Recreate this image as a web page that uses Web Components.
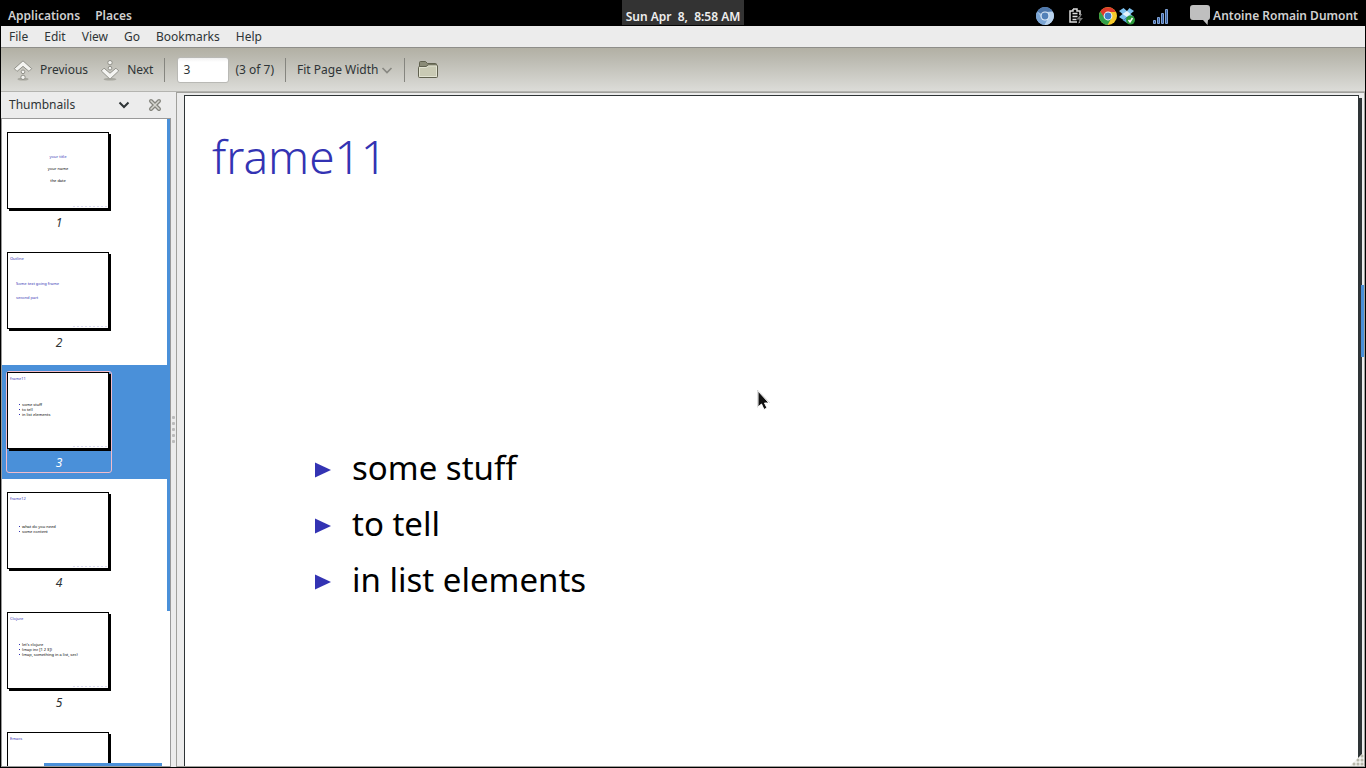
<!DOCTYPE html>
<html lang="en">
<head>
<meta charset="utf-8">
<title>Document viewer</title>
<style>
  html, body { margin: 0; height: 100%; }
  body {
    font-family: "Noto Sans", "Open Sans", sans-serif;
    font-size: 12px;
    line-height: 16px;
    color: #2e3436;
    background: #000;
  }
</style>
</head>
<body>
<desktop-screen></desktop-screen>

<script>
const define = (name, html, setup) => {
  const template = document.createElement('template');
  template.innerHTML = html;
  customElements.define(name, class extends HTMLElement {
    connectedCallback() {
      if (this.shadowRoot) return;
      const root = this.attachShadow({ mode: 'open' });
      root.append(template.content.cloneNode(true));
      if (setup) setup(this, root);
    }
  });
};

/* Desktop panel along the top edge */
define('top-panel', `
<style>
  :host { display: grid; grid-template-columns: 1fr auto 1fr; height: 26px; flex: none;
          background: #000; color: #d0d0d0; font-weight: 600; }
  nav { display: flex; align-items: center; gap: 15px; padding: 5px 8px 0; }
  a { color: inherit; text-decoration: none; }
  time { background: #333; color: #eee; padding: 8px 4px 0; height: 17px; line-height: 17px; white-space: pre; }
  .tray { display: flex; align-items: center; justify-content: flex-end; padding: 5px 8px 0; }
  svg { display: block; flex: none; }
  .battery { margin: 0 14px 0 13px; }
  .signal { margin: 0 20px 0 17px; }
  .chat { margin-right: 2px; }
  .user { white-space: nowrap; }
</style>
<nav><a href="#">Applications</a><a href="#">Places</a></nav>
<time>Sun Apr  8,  8:58 AM</time>
<div class="tray">
  <svg width="20" height="20" viewBox="0 0 20 20">
    <circle cx="10" cy="10" r="9" fill="#9fbfe3"/>
    <path d="M10 10 2.2 5.5A9 9 0 0 1 17.8 5.5L10 6z" fill="#4f78ab"/>
    <path d="M2.2 5.5A9 9 0 0 0 9.500 19L13.500 12 6.500 12z" fill="#7ba5d4"/>
    <path d="M17.8 5.800A9 9 0 0 1 9.500 19L13.500 12 13 6z" fill="#b9d3ee"/>
    <circle cx="10" cy="10" r="4.500" fill="#e2edf8"/><circle cx="10" cy="10" r="3.400" fill="#5381b8"/>
  </svg>
  <svg class="battery" width="16" height="18" viewBox="0 0 16 18">
    <path d="M5 2h4v2h3v4M9 15H2V4h3V2M11 15h1" fill="none" stroke="#ddd" stroke-width="1.500"/>
    <path d="M4.500 6.500h5M4.500 9.500h5M4.500 12.500h4" stroke="#ddd" stroke-width="1.500"/>
    <path d="M13 7 8.500 12.500h3L10 17l5-6h-3l2-4z" fill="#777"/>
  </svg>
  <svg width="20" height="20" viewBox="0 0 20 20">
    <circle cx="10" cy="10" r="9" fill="#f6c92a"/>
    <path d="M10 6h7.800A9 9 0 0 0 2.200 5.500L6 12 10 10z" fill="#dd3b2c"/>
    <path d="M2.200 5.500A9 9 0 0 0 9.500 19L13.500 12 6.500 12z" fill="#31a14a"/>
    <circle cx="10" cy="10" r="4.400" fill="#fff"/><circle cx="10" cy="10" r="3.400" fill="#3f7ec9"/>
  </svg>
  <svg width="18" height="18" viewBox="0 0 18 18">
    <path d="M5.500 1 1 4l3.500 3L1 10l4.500 3L9 10l3.500 3L16 10l-3.500-3L16 4l-4.500-3L9 4z" fill="#7cc1ef"/>
    <path d="M4.500 7 9 4l3.500 3L9 10z" fill="#e6f4fd"/>
    <path d="m4.500 13 4.500 3 4-3-1-1-3-2-3.500 3z" fill="#56a5de"/>
    <circle cx="12.500" cy="13" r="4.500" fill="#2b9a3a"/>
    <path d="m10.500 13 1.500 2 2.500-4" fill="none" stroke="#fff" stroke-width="1.500"/>
  </svg>
  <svg class="signal" width="16" height="16" viewBox="0 0 16 16">
    <g fill="#39609f" stroke="#7fa2d6" stroke-width="1">
      <path d="M.5 12.500h2v3h-2zM4.500 9.500h2v6h-2zM8.500 5.500h2v10h-2zM12.500 1.500h2v14h-2z"/>
    </g>
  </svg>
  <svg class="chat" width="22" height="22" viewBox="0 0 22 22">
    <path d="M4 0h14q3 0 3 3v9q0 3-2 3l-.5 5-4.500-5H4q-3 0-3-3V3q0-3 3-3z" fill="#bfbfbf"/>
  </svg>
  <span class="user">Antoine Romain Dumont</span>
</div>`);

define('menu-bar', `
<style>
  :host { display: flex; gap: 16px; align-items: center; height: 21px; padding: 0 8px; flex: none;
          background: #ececec; border-bottom: 1px solid #8e8e8a; }
  a { color: inherit; text-decoration: none; }
</style>
<a href="#">File</a><a href="#">Edit</a><a href="#">View</a><a href="#">Go</a><a href="#">Bookmarks</a><a href="#">Help</a>`);

define('tool-bar', `
<style>
  :host { display: flex; align-items: center; height: 43px; padding: 0 11px; flex: none;
          background: linear-gradient(#b2b0a4, #bdbcb3 30%, #dcdcd8); border-bottom: 1px solid #b4b4b0; }
  button { display: flex; align-items: center; gap: 6px; margin: 0; padding: 0; border: 0; background: none;
           font: inherit; color: inherit; }
  button + button { margin-left: 11px; }
  svg { display: block; }
  hr { width: 1px; height: 24px; margin: 0 11px; border: 0; background: #85857f; }
  input { width: 52px; height: 26px; box-sizing: border-box; margin: 0 6px 0 1px; padding: 0 5px; font: inherit; color: inherit;
          background: linear-gradient(#f0f0f0, #fff 4px); border: 1px solid #b9b9b5; border-radius: 3px; }
  label { display: flex; align-items: center; }
  select { appearance: none; border: 0; background: none; font: inherit; color: inherit; padding: 0; margin: 0; }
  .chevron { margin-left: 2px; }
  .folder { margin-left: 1px; }
</style>
<button type="button">
  <svg width="22" height="22" viewBox="0 0 22 24">
    <ellipse cx="11" cy="22" rx="6" ry="1.500" fill="#8e8d84" opacity=".6"/>
    <g fill="#f4f4f1" stroke="#8a8a82">
      <path d="M11 2 20.500 10.500 17.500 13.500 11 8 4.500 13.500 1.500 10.500z"/>
      <circle cx="11" cy="14" r="2"/><circle cx="11" cy="20" r="2.400"/>
    </g>
  </svg>Previous</button>
<button type="button">
  <svg width="22" height="22" viewBox="0 0 22 24">
    <ellipse cx="11" cy="22" rx="7" ry="1.500" fill="#8e8d84" opacity=".6"/>
    <g fill="#f4f4f1" stroke="#8a8a82">
      <circle cx="11" cy="4" r="2.400"/><circle cx="11" cy="10" r="2"/>
      <path d="M11 22 1.500 13 4.500 10 11 15.500 17.500 10 20.500 13z"/>
    </g>
  </svg>Next</button>
<hr>
<input type="text" value="3" aria-label="Page number">
<span>(3 of 7)</span>
<hr>
<label><select aria-label="Zoom"><option>Fit Page Width</option></select>
  <svg class="chevron" width="12" height="10" viewBox="0 0 12 10"><path d="m1.500 3 4.500 4.500L10.500 3" fill="none" stroke="#888882" stroke-width="1.700"/></svg>
</label>
<hr>
<button type="button" class="folder" aria-label="Open folder">
  <svg width="22" height="20" viewBox="0 0 22 20">
    <path d="M2.500 16V2.500q0-1 1-1h5l2 2h8q1 0 1 1V10" fill="#8a8b77" stroke="#60614f"/>
    <path d="M1.500 7.500q0-1 1-1h6.500l2-1.500h8.500q1 0 1 1v10.500q0 1-1 1h-17q-1 0-1-1z" fill="#c9cab4" stroke="#60614f"/>
    <path d="M2.500 16.500v-9H9.500l2-1.500h8v10.500z" fill="none" stroke="#e2e3d2"/>
  </svg>
</button>`);

/* One page miniature with its number below it */
define('page-thumb', `
<style>
  :host { display: block; height: 114px; box-sizing: border-box; padding: 6px 4px; margin-bottom: 6px; margin-right: 3px; }
  :host([selected]) { background: #4a90d9; color: #fff; }
  figure { margin: 0; width: 104px; height: 100px; border: 1px solid transparent; border-radius: 3px; }
  :host([selected]) figure { border-color: #f2bccb; }
  .page { position: relative; width: 96px; height: 72px; padding: 3px 2px 0; border: 1px solid #000;
          background: #fff; box-shadow: 2px 2px #000; overflow: hidden; color: #000; font-size: 4px; line-height: 5px; }
  .title { height: 23px; color: #3333b3; }
  .nav { position: absolute; right: 1px; bottom: 1px; width: 34px; height: 1px;
         background: repeating-linear-gradient(90deg, #dcdcf2 0 2px, #fff 2px 4px); }
  figcaption { text-align: center; font-style: italic; padding-top: 6px; width: 104px; line-height: 16px; }
</style>
<figure>
  <div class="page"><div class="title"></div><slot></slot><div class="nav"></div></div>
  <figcaption></figcaption>
</figure>`, (host, root) => {
  root.querySelector('.title').textContent = host.getAttribute('heading') || '';
  root.querySelector('figcaption').textContent = host.getAttribute('number') || '';
});

define('side-pane', `
<style>
  :host { display: flex; flex-direction: column; width: 170px; flex: none; min-height: 0; background: #ececec; }
  header { display: flex; align-items: center; height: 26px; flex: none; padding: 0 9px 0 8px; }
  header span { flex: 1; }
  button { border: 0; padding: 0; margin: 0 0 0 18px; background: none; display: block; }
  svg { display: block; }
  .list { position: relative; flex: 1; min-height: 0; overflow: hidden; background: #fff; border: 1px solid #999; padding-top: 6px; }
  .vbar { position: absolute; right: 0; top: 0; width: 3px; height: 76%; background: #4a90d9; }
  .hbar { position: absolute; left: 25%; bottom: 0; width: 70%; height: 3px; background: #4a90d9; }
  p { margin: 0; }
  .center { text-align: center; margin-top: -8px; line-height: 12px; }
  .blue { color: #3333b3; }
  .toc { padding-left: 6px; line-height: 14px; margin-top: -2px; }
  .items { padding: 3px 0 0 9px; }
  .items.two { padding-top: 5px; }
  .items p::before { content: ""; display: inline-block; width: 1px; height: 1px; margin-right: 2px; vertical-align: 1px; background: #3333b3; }
</style>
<header><span>Thumbnails</span>
  <button type="button" aria-label="Choose side pane"><svg width="12" height="12" viewBox="0 0 12 12"><path d="m1.500 3.500 4.500 4.500 4.500-4.500" fill="none" stroke="#2e3436" stroke-width="2"/></svg></button>
  <button type="button" aria-label="Close side pane"><svg width="14" height="14" viewBox="0 0 14 14"><path d="m3 3 8 8M11 3l-8 8" fill="none" stroke="#85857e" stroke-width="4" stroke-linecap="round"/><path d="m3 3 8 8M11 3l-8 8" fill="none" stroke="#d6d6d0" stroke-width="1.500" stroke-linecap="round"/></svg></button>
</header>
<div class="list">
  <page-thumb number="1"><div class="center"><p class="blue">your title</p><p>your name</p><p>the date</p></div></page-thumb>
  <page-thumb number="2" heading="Outline"><div class="toc blue"><p>Some text going frame</p><p>second part</p></div></page-thumb>
  <page-thumb number="3" heading="frame11" selected><div class="items"><p>some stuff</p><p>to tell</p><p>in list elements</p></div></page-thumb>
  <page-thumb number="4" heading="frame12"><div class="items two"><p>what do you need</p><p>some content</p></div></page-thumb>
  <page-thumb number="5" heading="Clojure"><div class="items"><p>let's clojure</p><p>(map inc [1 2 3])</p><p>(map, something in a list, sec)</p></div></page-thumb>
  <page-thumb heading="Emacs"></page-thumb>
  <div class="vbar"></div><div class="hbar"></div>
</div>`);

define('pane-grip', `
<style>
  :host { display: flex; flex-direction: column; align-items: center; justify-content: center; gap: 3px; width: 5px; flex: none; background: #ececec; }
  i { width: 3px; height: 3px; border-radius: 1px; background: #bbb; }
</style><i></i><i></i><i></i><i></i><i></i>`);

define('slide-view', `
<style>
  :host { position: relative; display: flex; flex: 1; min-width: 0; background: #ececec; border: 1px solid #a0a09c; padding: 2px 2px 0 7px; }
  article { flex: 1; background: #fff; border: 1px solid #2e3436; border-width: 1px 1px 0; box-shadow: 3px 3px #2e3436;
            margin-right: 3px; padding: 0 27px; clip-path: inset(0 -3px 0 0); }
  h1 { margin: 28px 0 0; font-size: 46px; line-height: 64px; font-weight: 350; color: #3333b3; }
  ul { list-style: none; margin: 252px 0 0; padding: 0 0 0 103px; color: #000; font-size: 33px; line-height: 56px; }
  li { display: flex; align-items: center; gap: 21px; }
  li svg { flex: none; margin-top: 3px; }
  .scroll { position: absolute; right: 0; top: 192px; width: 3px; height: 72px; background: #4a90d9; }
  .pointer { position: absolute; left: 580px; top: 297px; }
  .grip { position: absolute; right: 0; bottom: 0; }
</style>
<article>
  <h1>frame11</h1>
  <ul>
    <li><svg width="16" height="16" viewBox="0 0 16 16"><path d="M0 .5 16 8 0 15.500z" fill="#3333b3"/></svg>some stuff</li>
    <li><svg width="16" height="16" viewBox="0 0 16 16"><path d="M0 .5 16 8 0 15.500z" fill="#3333b3"/></svg>to tell</li>
    <li><svg width="16" height="16" viewBox="0 0 16 16"><path d="M0 .5 16 8 0 15.500z" fill="#3333b3"/></svg>in list elements</li>
  </ul>
</article>
<div class="scroll"></div>
<svg class="pointer" width="14" height="22" viewBox="0 0 14 22"><path d="M1 1v16l3.500-3L7 19.500l3-1.500-2.500-5H12z" fill="#111" stroke="#fff"/><path d="M.5 0v17.500M.5 0 13 13" stroke="#bbb" stroke-width=".5"/></svg>
<svg class="grip" width="14" height="14" viewBox="0 0 14 14"><path d="M14 0v14H0z" fill="#f2f2ee"/><g fill="#b9b9ac"><circle cx="12" cy="4" r="1.500"/><circle cx="12" cy="8" r="1.500"/><circle cx="12" cy="12" r="1.500"/><circle cx="8" cy="8" r="1.500"/><circle cx="8" cy="12" r="1.500"/><circle cx="4" cy="12" r="1.500"/></g></svg>`);

define('desktop-screen', `
<style>
  :host { display: flex; flex-direction: column; height: 100vh; }
  main { flex: 1; min-height: 0; display: flex; flex-direction: column; margin: 0 1px 1px; background: #ececec; }
  .body { flex: 1; min-height: 0; display: flex; }
</style>
<top-panel></top-panel>
<main>
  <menu-bar></menu-bar>
  <tool-bar></tool-bar>
  <div class="body"><side-pane></side-pane><pane-grip></pane-grip><slide-view></slide-view></div>
</main>`);
</script>
</body>
</html>
